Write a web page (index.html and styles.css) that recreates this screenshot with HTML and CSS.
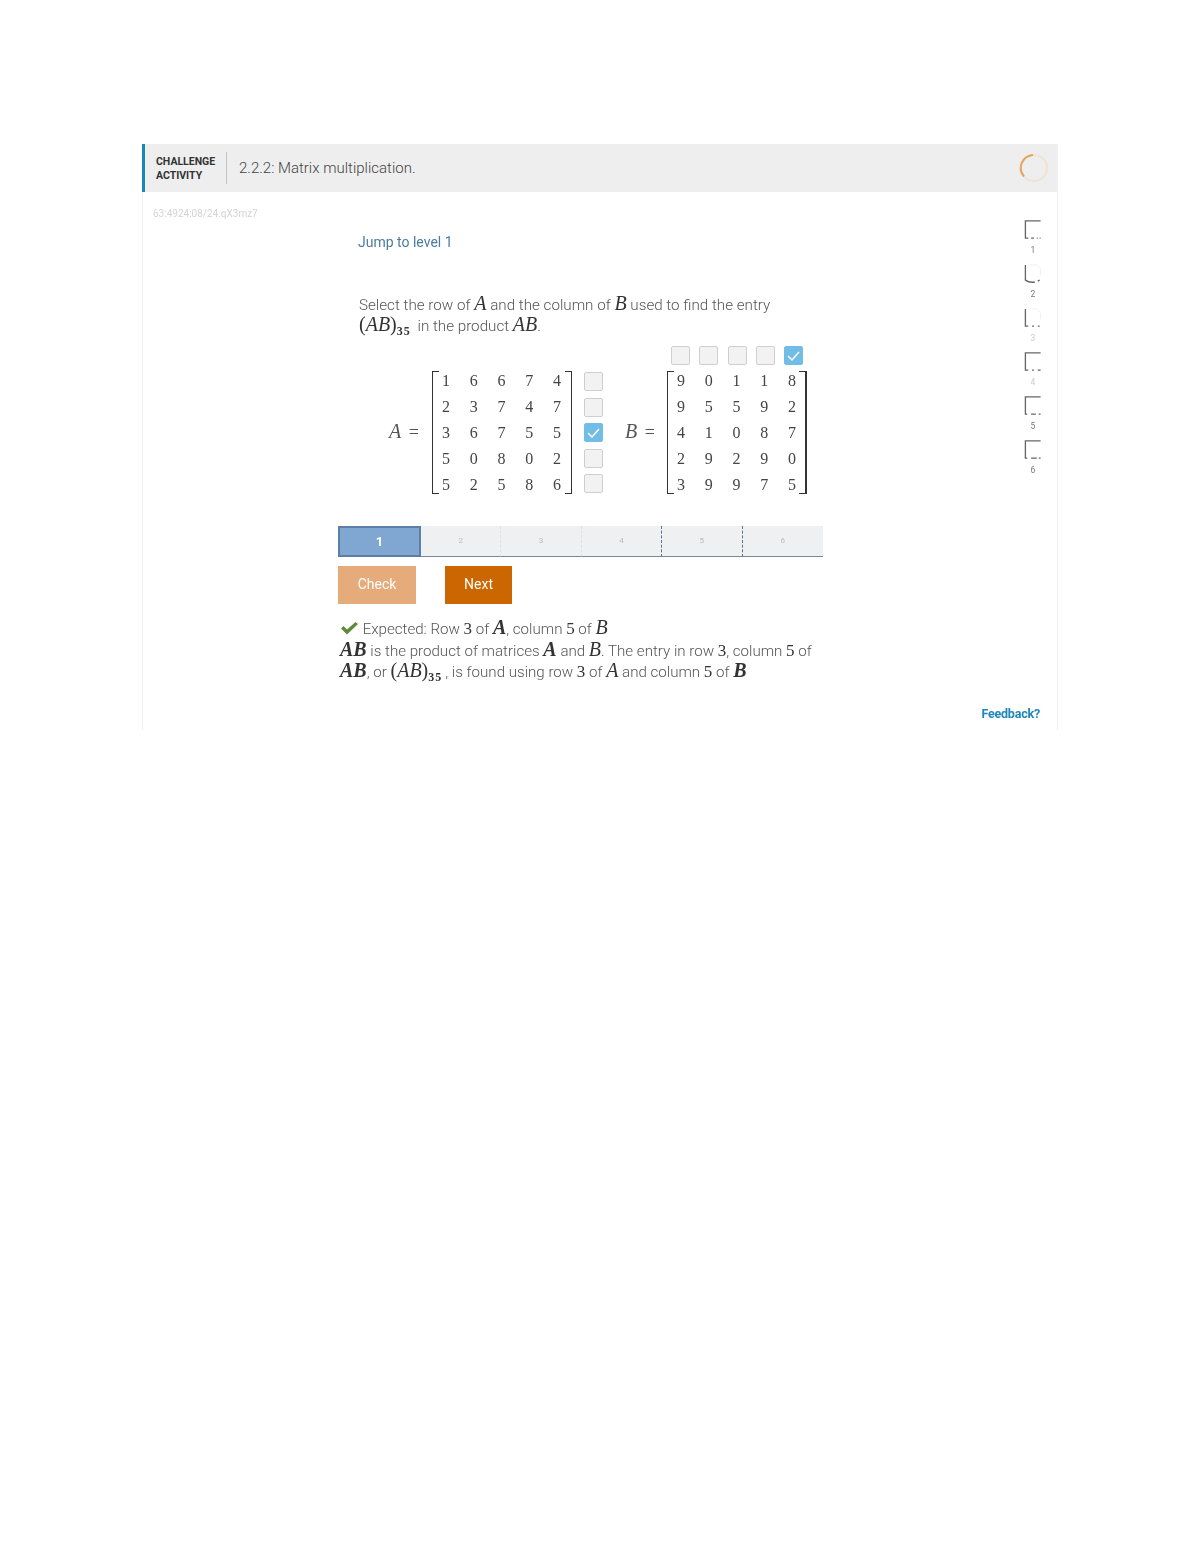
FILE: index.html
```html
<!DOCTYPE html>
<html lang="en">
<head>
  <meta charset="UTF-8" />
  <title>Matrix multiplication</title>
  <link rel="stylesheet" href="styles.css">
</head>
<body>
  <div class="activity">
    <div class="activity-header">
      <div class="activity-type">CHALLENGE<br>ACTIVITY</div>
      <div class="activity-title">2.2.2: Matrix multiplication.</div>
      <svg class="spinner" width="30" height="30" viewBox="0 0 30 30">
        <circle cx="15" cy="15" r="13" fill="none" stroke="#efe3d6" stroke-width="2" />
        <path d="M5 23.5 A13 13 0 0 1 14 2" fill="none" stroke="#e9a360" stroke-width="2" />
      </svg>
    </div>

    <div class="activity-body">
      <div class="id-col">63:4924:08/24.qX3mz7</div>

      <div class="main">
        <a class="jump">Jump to level 1</a>
        <p class="prompt">Select the row of <i class="m">A</i> and the column of <i class="m">B</i> used to find the entry<br>
          <span class="m-up">(</span><i class="m">AB</i><span class="m-up">)</span><sub class="sub">35</sub> in the product <i class="m">AB</i>.</p>

        <div class="problem">
          <div class="top-checks">
            <span class="box"></span><span class="box"></span><span class="box"></span><span class="box"></span>
            <span class="box on"><svg width="17" height="17" viewBox="0 0 17 17"><path d="M3 9 L7 13 L14 5" fill="none" stroke="#fff" stroke-width="1.5" /></svg></span>
          </div>

          <div class="eq-label"><i class="m">A</i> =</div>
          <div class="matrix">
            <span class="bracket left"></span>
            <div class="cells">
              <span>1</span><span>6</span><span>6</span><span>7</span><span>4</span>
              <span>2</span><span>3</span><span>7</span><span>4</span><span>7</span>
              <span>3</span><span>6</span><span>7</span><span>5</span><span>5</span>
              <span>5</span><span>0</span><span>8</span><span>0</span><span>2</span>
              <span>5</span><span>2</span><span>5</span><span>8</span><span>6</span>
            </div>
            <span class="bracket right"></span>
          </div>
          <div class="side-checks">
            <span class="box"></span><span class="box"></span>
            <span class="box on"><svg width="17" height="17" viewBox="0 0 17 17"><path d="M3 9 L7 13 L14 5" fill="none" stroke="#fff" stroke-width="1.5" /></svg></span>
            <span class="box"></span><span class="box"></span>
          </div>

          <div class="eq-label b"><i class="m">B</i> =</div>
          <div class="matrix">
            <span class="bracket left"></span>
            <div class="cells">
              <span>9</span><span>0</span><span>1</span><span>1</span><span>8</span>
              <span>9</span><span>5</span><span>5</span><span>9</span><span>2</span>
              <span>4</span><span>1</span><span>0</span><span>8</span><span>7</span>
              <span>2</span><span>9</span><span>2</span><span>9</span><span>0</span>
              <span>3</span><span>9</span><span>9</span><span>7</span><span>5</span>
            </div>
            <span class="bracket right heavy"></span>
          </div>
        </div>

        <div class="steps">
          <div class="step current">1</div>
          <div class="step dots-light">2</div>
          <div class="step dots-light">3</div>
          <div class="step dots-dark">4</div>
          <div class="step dots-dark">5</div>
          <div class="step">6</div>
        </div>

        <div class="buttons">
          <button class="btn check">Check</button>
          <button class="btn next">Next</button>
        </div>

        <div class="explanation">
          <svg class="tick" width="19" height="14" viewBox="0 0 19 14"><path d="M1 7.5 L3.5 5 L7 8.5 L15.5 1 L18 3 L7 13.5 Z" fill="#5f8a3c" /></svg>
          Expected: Row <b class="n">3</b> of <i class="m bold">A</i>, column <b class="n">5</b> of <i class="m">B</i><br>
          <i class="m bold">AB</i> is the product of matrices <i class="m bold">A</i> and <i class="m">B</i>. The entry in row <b class="n">3</b>, column <b class="n">5</b> of<br>
          <i class="m bold">AB</i>, or <span class="m-up">(</span><i class="m">AB</i><span class="m-up">)</span><sub class="sub">35</sub>, is found using row <b class="n">3</b> of <i class="m">A</i> and column <b class="n">5</b> of <i class="m bold">B</i>
        </div>
      </div>

      <div class="side">
        <div class="levels">
          <div class="level">
            <svg width="18" height="20" viewBox="0 0 18 20"><path d="M17 1 H1 V19 H4 M7 19 H10 M13 19 H14 M16 19 H17" fill="none" stroke="#666" stroke-width="1.4" /></svg>
            <span>1</span>
          </div>
          <div class="level">
            <svg width="18" height="20" viewBox="0 0 18 20"><path d="M1 1 V17 Q5 20 11 19 M14 18 L16 17" fill="none" stroke="#666" stroke-width="1.4" /><path d="M5 1 H13 L17 5 V12" fill="none" stroke="#eee" stroke-width="1" /></svg>
            <span>2</span>
          </div>
          <div class="level">
            <svg width="18" height="20" viewBox="0 0 18 20"><path d="M1 1 V19 H4 M8 19 H10 M14 19 H16" fill="none" stroke="#666" stroke-width="1.4" /><path d="M5 1 H13 L17 5 V12" fill="none" stroke="#f0f0f0" stroke-width="1" /></svg>
            <span class="faint">3</span>
          </div>
          <div class="level">
            <svg width="18" height="20" viewBox="0 0 18 20"><path d="M17 1 H1 V19 H4 M8 19 H10 M14 19 H17" fill="none" stroke="#666" stroke-width="1.4" /></svg>
            <span class="faint">4</span>
          </div>
          <div class="level">
            <svg width="18" height="20" viewBox="0 0 18 20"><path d="M17 1 H1 V19 H3 M7 19 H12 M15 19 H17" fill="none" stroke="#666" stroke-width="1.4" /></svg>
            <span>5</span>
          </div>
          <div class="level">
            <svg width="18" height="20" viewBox="0 0 18 20"><path d="M17 1 H1 V19 H3 M7 19 H13 M15 19 H17" fill="none" stroke="#666" stroke-width="1.4" /></svg>
            <span>6</span>
          </div>
        </div>
        <a class="feedback">Feedback?</a>
      </div>
    </div>
  </div>
</body>
</html>
```

FILE: styles.css
```css
body {
  margin: 0;
  background: #fff;
  color: #555;
  font-family: "Roboto", sans-serif;
}

.activity {
  box-sizing: border-box;
  width: 916px;
  height: 586px;
  margin: 144px 0 0 142px;
  border-left: 1px solid #f1f1f1;
  border-right: 1px solid #f1f1f1;
  display: flex;
  flex-direction: column;
  filter: blur(0.4px);
}

/* header strip */
.activity-header {
  display: flex;
  align-items: center;
  height: 48px;
  flex-shrink: 0;
  margin-left: -1px;
  background: #eeeeee;
  border-left: 3px solid #1b87b8;
  box-sizing: border-box;
}

.activity-type {
  width: 70px;
  padding: 2px 0 0 11px;
  box-sizing: border-box;
  font-size: 10.5px;
  font-weight: 700;
  line-height: 14px;
  color: #333;
}

.activity-title {
  margin-left: 11px;
  padding-left: 12px;
  height: 32px;
  line-height: 32px;
  border-left: 1px solid #c4c4c4;
  font-size: 15px;
  font-weight: 300;
  color: #444;
}

.spinner {
  margin-left: auto;
  margin-right: 8px;
}

/* body */
.activity-body {
  display: flex;
  flex: 1;
}

.id-col {
  width: 195px;
  box-sizing: border-box;
  padding: 16px 0 0 10px;
  font-size: 10px;
  color: #d4d4d4;
}

.main {
  width: 485px;
}

.jump {
  display: block;
  margin: 42px 0 0 20px;
  font-size: 14px;
  line-height: 16px;
  color: #4b7c9f;
}

.prompt {
  margin: 45px 0 0 21px;
  font-size: 15.2px;
  font-weight: 300;
  line-height: 21px;
  color: #555;
}

.m {
  font-family: "Liberation Serif", serif;
  font-style: italic;
  font-size: 20px;
  line-height: 0;
  color: #333;
}

.m-up {
  font-family: "Liberation Serif", serif;
  font-size: 20px;
  line-height: 0;
  color: #333;
}

.bold {
  font-weight: 700;
}

.n {
  font-family: "Liberation Serif", serif;
  font-size: 17px;
  line-height: 0;
  color: #333;
}

.sub {
  margin-right: 3px;
  font-family: "Liberation Serif", serif;
  font-size: 12px;
  font-weight: 700;
  letter-spacing: 1px;
  line-height: 0;
  color: #333;
}

/* matrices */
.problem {
  display: grid;
  grid-template-columns: 43px 140px 31px 64px 140px;
  grid-template-rows: 18px 123px;
  row-gap: 7px;
  margin: 9px 0 0 51px;
}

.top-checks {
  grid-column: 5;
  display: flex;
  justify-content: space-between;
  padding: 0 4px;
}

.eq-label {
  grid-row: 2;
  align-self: center;
  font-family: "Liberation Serif", serif;
  font-size: 18px;
  word-spacing: 3px;
  color: #555;
}

.eq-label .m {
  color: #555;
}

.eq-label.b {
  padding-left: 22px;
}

.matrix {
  grid-row: 2;
  display: flex;
}

.bracket {
  flex-shrink: 0;
  width: 6px;
  margin-right: -3px;
  border: solid #333;
  border-width: 1.5px 0 1.5px 1.5px;
}

.bracket.right {
  margin: 0 0 0 -3px;
  border-width: 1.5px 1.5px 1.5px 0;
}

.bracket.heavy {
  border-right-width: 2px;
}

.cells {
  flex: 1;
  display: grid;
  grid-template-columns: repeat(5, 20px);
  grid-auto-rows: 20px;
  gap: 6px 7.75px;
  font-family: "Liberation Serif", serif;
  font-size: 16px;
  line-height: 20px;
  text-align: center;
  color: #444;
}

.side-checks {
  grid-row: 2;
  display: flex;
  flex-direction: column;
  gap: 6.5px;
  padding: 1px 0 0 12px;
}

.box {
  box-sizing: border-box;
  width: 19px;
  height: 19px;
  background: #f2f2f2;
  border: 1px solid #cfcfcf;
  border-radius: 2px;
  display: block;
}

.box.on {
  background: #71bde6;
  border-color: #71bde6;
}

.box svg {
  display: block;
  margin: 0;
}

/* level steps */
.steps {
  display: grid;
  grid-template-columns: 83px repeat(5, 80.4px);
  height: 31px;
  margin-top: 32px;
}

.step {
  box-sizing: border-box;
  background: #eef0f1;
  border-bottom: 1.5px solid #75879a;
  font-size: 8px;
  line-height: 29px;
  text-align: center;
  color: #bbb;
}

.step.current {
  background: #7fa7d1;
  border: 2px solid #5b7fa6;
  font-size: 13px;
  font-weight: 700;
  line-height: 27px;
  color: #fff;
}

.step.dots-light {
  border-right: 1px dashed #d8e3ee;
}

.step.dots-dark {
  border-right: 1px dashed #5b7196;
}

/* buttons */
.buttons {
  display: flex;
  gap: 29px;
  margin-top: 9px;
}

.btn {
  height: 38px;
  padding: 0 0 2px;
  border: none;
  font-family: "Roboto", sans-serif;
  font-size: 14px;
  color: #fff;
}

.btn.check {
  width: 78px;
  background: #e5ab7b;
}

.btn.next {
  width: 67px;
  background: #cc6600;
}

/* answer text */
.explanation {
  margin: 15px 0 0 2px;
  font-size: 15.1px;
  font-weight: 300;
  line-height: 21.5px;
  color: #555;
}

.tick {
  vertical-align: -1px;
}

/* right column */
.side {
  flex: 1;
  display: flex;
  flex-direction: column;
  align-items: flex-end;
  padding: 28px 15px 9px 0;
  box-sizing: border-box;
}

.levels {
  display: flex;
  flex-direction: column;
  gap: 2px;
}

.level {
  display: flex;
  flex-direction: column;
  align-items: center;
  height: 42px;
  font-size: 8.5px;
  line-height: 23px;
  color: #777;
}

.level svg {
  display: block;
}

.level .faint {
  color: #ccc;
}

.feedback {
  margin: auto 2px 0 0;
  font-size: 12.5px;
  font-weight: 700;
  letter-spacing: -0.2px;
  color: #1f86b8;
}
```
